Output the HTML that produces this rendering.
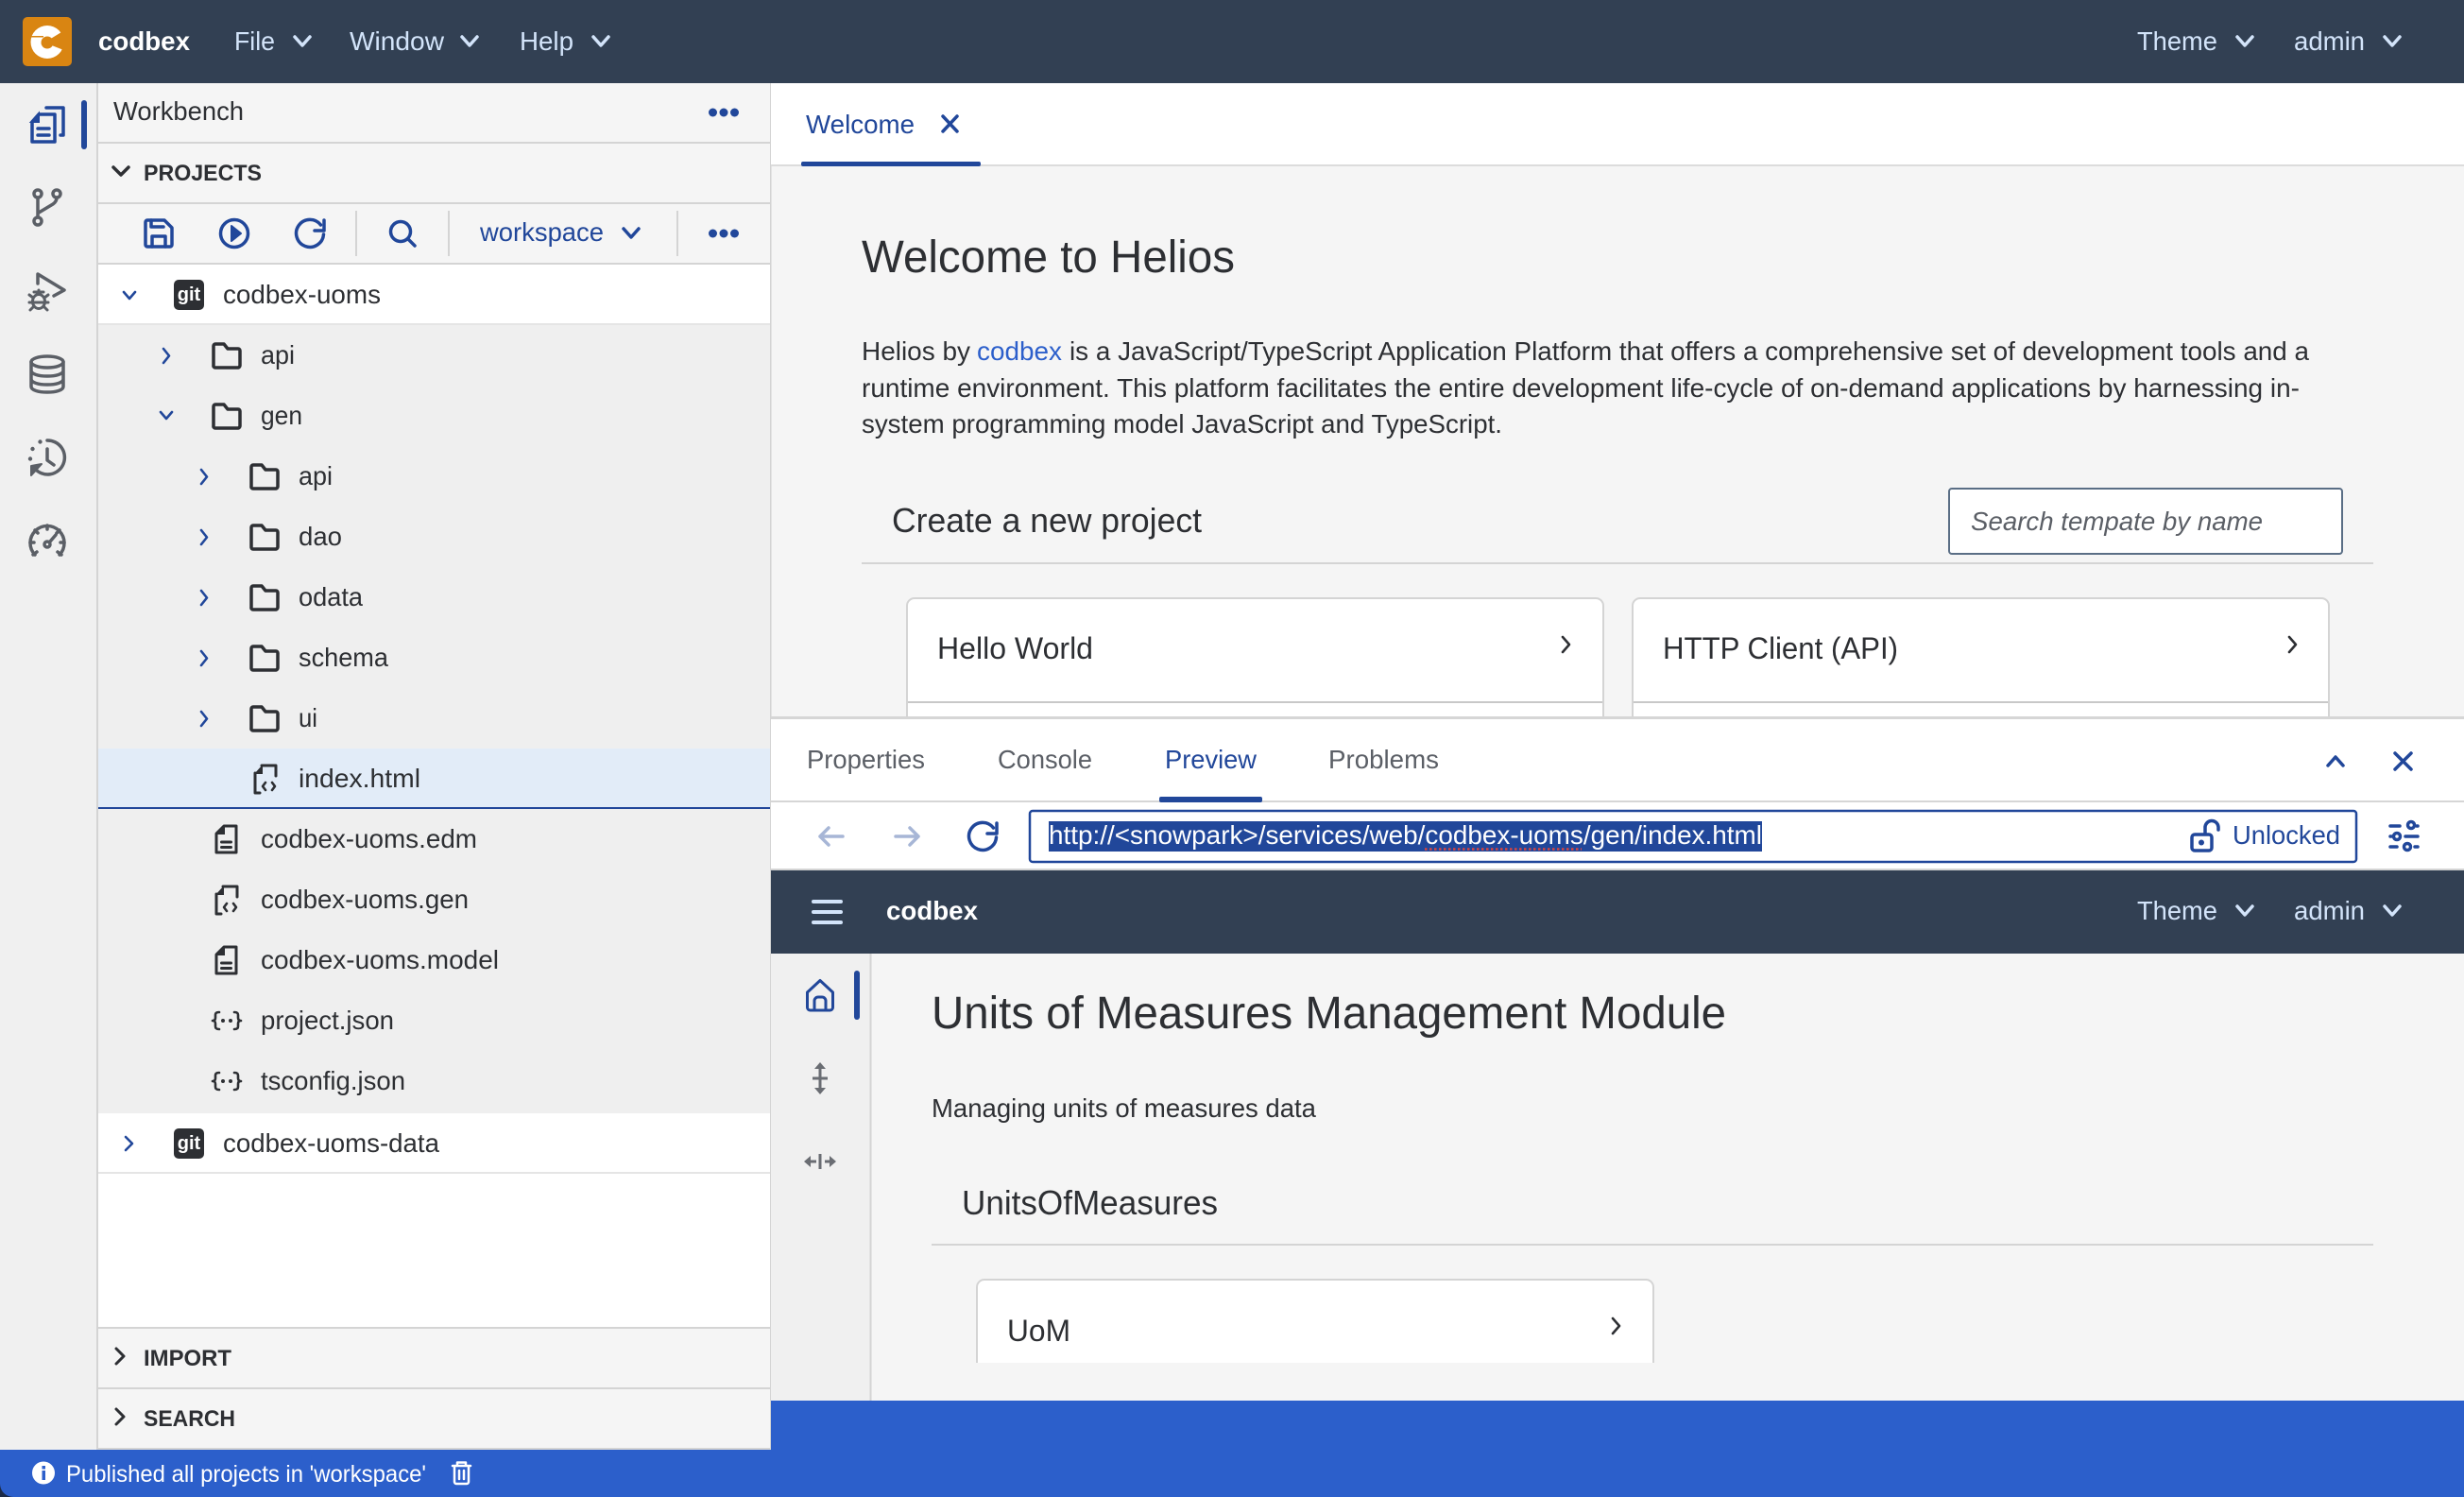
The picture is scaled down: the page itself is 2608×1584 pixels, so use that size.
<!DOCTYPE html>
<html><head><meta charset="utf-8"><title>codbex</title>
<style>
html,body{margin:0;padding:0;background:#f5f5f5;overflow:hidden}
svg{display:block}
text{font-family:"Liberation Sans",Arial,sans-serif;font-size:28px;fill:#2d2f33}
.nav{fill:#d3e4fa}.w{fill:#fff;font-weight:700}.b{fill:#21479a}.h{font-weight:700;font-size:24px}
.g{fill:#5b5f66}.ic{fill:none;stroke:#5b5f66;stroke-width:3.5;stroke-linecap:round;stroke-linejoin:round}
.ib{fill:none;stroke:#21479a;stroke-width:3.5;stroke-linecap:round;stroke-linejoin:round}
.id{fill:none;stroke:#2d2f33;stroke-width:3.5;stroke-linejoin:round;stroke-linecap:round}
.in{fill:none;stroke:#d3e4fa;stroke-width:3.5;stroke-linecap:round;stroke-linejoin:round}
.ik{fill:none;stroke:#2d2f33;stroke-width:2.6;stroke-linecap:round;stroke-linejoin:round}
.t{stroke-width:2.6}
.t3{stroke-width:3}
</style></head><body>
<svg xmlns="http://www.w3.org/2000/svg" width="2608" height="1584" viewBox="0 0 2608 1584">
<defs>
<g id="folder"><path class="id" d="M2 4a2 2 0 0 1 2-2h9l4 5h11a2 2 0 0 1 2 2v15.500a2.500 2.500 0 0 1-2 2.500H4a2 2 0 0 1-2-2.500z"/></g>
<g id="fdoc"><path class="id t3" d="M10 2h13v28H2V10z"/><path d="M11 1v10H1z" fill="#2d2f33"/><path class="id t3" d="M7.500 19h10M7.500 24.500h10"/></g>
<g id="fcode"><path class="id t3" d="M9 2h15v11M2 10v21h5"/><path d="M10 1v10H1z" fill="#2d2f33"/><path class="ik" d="M13 20l-3 4 3 4M20 20l3 4-3 4"/></g>
<g id="fjson"><path class="id t" d="M8 2C5 2 4 3 4 5v3c0 2-1 3-3 3 2 0 3 1 3 3v3c0 2 1 3 4 3M24 2c3 0 4 1 4 3v3c0 2 1 3 3 3-2 0-3 1-3 3v3c0 2-1 3-4 3"/><circle cx="12" cy="11" r="2" fill="#2d2f33"/><circle cx="20" cy="11" r="2" fill="#2d2f33"/></g>
<g id="dots"><circle cx="4.500" cy="0" r="4.500" fill="#21479a"/><circle cx="16" cy="0" r="4.500" fill="#21479a"/><circle cx="27.500" cy="0" r="4.500" fill="#21479a"/></g>
</defs>

<rect width="2608" height="1584" fill="#f5f5f5"/>
<!-- Main header -->
<rect width="2608" height="88" fill="#324053"/>
<rect x="24" y="18" width="52" height="52" rx="5" fill="#d98512"/>
<circle cx="50" cy="44.500" r="17.500" fill="#fff"/>
<path d="M47 45L70 31V54z" fill="#d98512"/><circle cx="50" cy="45" r="6.500" fill="#d98512"/>
<rect x="32" y="38" width="14" height="1.500" fill="#d98512"/>
<text x="104" y="53" class="w" textLength="97" lengthAdjust="spacingAndGlyphs">codbex</text>
<text x="248" y="53" class="nav" textLength="43" lengthAdjust="spacingAndGlyphs">File</text>
<path class="in" d="M312 39l8 9 8-9"/>
<text x="370" y="53" class="nav" textLength="100" lengthAdjust="spacingAndGlyphs">Window</text>
<path class="in" d="M489 39l8 9 8-9"/>
<text x="550" y="53" class="nav" textLength="57" lengthAdjust="spacingAndGlyphs">Help</text>
<path class="in" d="M628 39l8 9 8-9"/>
<text x="2262" y="53" class="nav" textLength="85" lengthAdjust="spacingAndGlyphs">Theme</text>
<path class="in" d="M2368 39l8 9 8-9"/>
<text x="2428" y="53" class="nav" textLength="75" lengthAdjust="spacingAndGlyphs">admin</text>
<path class="in" d="M2524 39l8 9 8-9"/>

<!-- Left rail -->
<rect x="0" y="88" width="103" height="1446" fill="#f0f0f0"/>
<rect x="102" y="88" width="2" height="1446" fill="#d4d4d4"/>
<rect x="86" y="106" width="6" height="52" rx="3" fill="#21479a"/>
<path class="ib" d="M41 121h17v29H34v-21z"/><path d="M41 120v9h-8z" fill="#21479a" stroke="#21479a" stroke-width="2"/>
<path class="ib" d="M40 136h12M40 143h12M49 114h18v29h-3"/>
<g class="ic"><circle cx="40" cy="205" r="4"/><circle cx="60" cy="205" r="4"/><circle cx="40" cy="234" r="4"/><path d="M40 209v21M60 209c0 3-1 5-4 7l-15 9"/></g>
<g class="ic"><path d="M40 300v-10l28 17-11 6"/><ellipse cx="41" cy="319" rx="6.500" ry="7.500" class="t3" style="fill:none;stroke:#5b5f66"/><path class="t3" d="M41 307h0M36 309l10 0M31 312l4 3M51 312l-4 3M31 320h5M51 320h-5M32 328l4-4M50 328l-4-4M36 320h10"/></g>
<g class="ic"><ellipse cx="50" cy="383" rx="17" ry="6"/><path d="M33 383v26c0 4 8 6 17 6s17-2 17-6v-26M33 392c0 4 8 6 17 6s17-2 17-6M33 401c0 4 8 6 17 6s17-2 17-6"/></g>
<g class="ic"><path d="M50 466a18 18 0 1 1-13 30"/><path d="M50 475v12l7 5"/></g>
<path d="M33 493l11-2-11 12z" fill="#5b5f66" stroke="#5b5f66" stroke-width="2" stroke-linejoin="round"/>
<circle cx="42.500" cy="467.500" r="2.200" fill="#5b5f66"/><circle cx="34.500" cy="475" r="2.200" fill="#5b5f66"/><circle cx="32" cy="485.500" r="2.200" fill="#5b5f66"/>
<g class="ic"><path d="M37 587a18 18 0 1 1 26 0"/><path d="M50 556v4M32 574h4M68 574h-4M37 561l3 3M63 561l-3 3M35 587l4-3M65 587l-4-3" /><path d="M53 573l6-7"/><circle cx="50" cy="576" r="3"/></g>

<!-- Left panel -->
<rect x="104" y="88" width="712" height="62" fill="#f5f5f5"/>
<rect x="104" y="150" width="712" height="2" fill="#d4d4d4"/>
<text x="120" y="127" textLength="138" lengthAdjust="spacingAndGlyphs">Workbench</text>
<use href="#dots" x="750" y="119"/>
<rect x="104" y="214" width="712" height="2" fill="#d4d4d4"/>
<path class="id" d="M120 177l8 8 8-8"/>
<text x="152" y="191" class="h" textLength="125" lengthAdjust="spacingAndGlyphs">PROJECTS</text>
<rect x="104" y="278" width="712" height="2" fill="#d4d4d4"/>
<g transform="translate(152 231)" class="ib"><path d="M4 2h18l8 8v18a2 2 0 0 1-2 2H4a2 2 0 0 1-2-2V4a2 2 0 0 1 2-2z"/><path d="M8 2v7h13M9 30V19h14v11"/></g>
<g transform="translate(232 231)" class="ib"><circle cx="16" cy="16" r="14.500"/></g><path d="M245 239l10 8-10 8z" fill="#21479a" stroke="#21479a" stroke-linejoin="round" stroke-width="2"/>
<g transform="translate(312 231)" class="ib"><path d="M27.500 7A14.500 14.500 0 1 0 30.500 17"/><path d="M31 2v11H21"/></g>
<rect x="376" y="223" width="2" height="48" fill="#d4d4d4"/>
<g transform="translate(412 233)" class="ib"><circle cx="12" cy="12" r="10.500"/><path d="M20 20l7 7"/></g>
<rect x="474" y="223" width="2" height="48" fill="#d4d4d4"/>
<text x="508" y="255" class="b" textLength="131" lengthAdjust="spacingAndGlyphs">workspace</text>
<path class="ib" d="M660 242l8 9 8-9"/>
<rect x="716" y="223" width="2" height="48" fill="#d4d4d4"/>
<use href="#dots" x="750" y="247"/>

<rect x="104" y="280" width="712" height="62" fill="#fff"/>
<rect x="104" y="342" width="712" height="2" fill="#e5e5e5"/>
<rect x="104" y="344" width="712" height="834" fill="#efefef"/>
<rect x="104" y="1178" width="712" height="226" fill="#fff"/>
<rect x="104" y="1240" width="712" height="2" fill="#e5e5e5"/>
<rect x="104" y="792" width="712" height="62" fill="#e2ecf8"/>
<rect x="104" y="854" width="712" height="2" fill="#21479a"/>

<path class="ib t" d="M131 309l6 7 6-7"/>
<rect x="184" y="296" width="32" height="32" rx="5" fill="#2d2f33"/>
<text x="200" y="318" text-anchor="middle" style="font-size:20px;font-weight:700;fill:#fff">git</text>
<text x="236" y="321" textLength="167" lengthAdjust="spacingAndGlyphs">codbex-uoms</text>

<path class="ib t" d="M173 369l6 7.500-6 7.500"/><use href="#folder" x="224" y="362"/>
<text x="276" y="385" textLength="36" lengthAdjust="spacingAndGlyphs">api</text>
<path class="ib t" d="M170 436l6 7 6-7"/><use href="#folder" x="224" y="426"/>
<text x="276" y="449" textLength="44" lengthAdjust="spacingAndGlyphs">gen</text>

<path class="ib t" d="M213 497l6 7.500-6 7.500"/><use href="#folder" x="264" y="490"/>
<text x="316" y="513" textLength="36" lengthAdjust="spacingAndGlyphs">api</text>
<path class="ib t" d="M213 561l6 7.500-6 7.500"/><use href="#folder" x="264" y="554"/>
<text x="316" y="577" textLength="46" lengthAdjust="spacingAndGlyphs">dao</text>
<path class="ib t" d="M213 625l6 7.500-6 7.500"/><use href="#folder" x="264" y="618"/>
<text x="316" y="641" textLength="68" lengthAdjust="spacingAndGlyphs">odata</text>
<path class="ib t" d="M213 689l6 7.500-6 7.500"/><use href="#folder" x="264" y="682"/>
<text x="316" y="705" textLength="95" lengthAdjust="spacingAndGlyphs">schema</text>
<path class="ib t" d="M213 753l6 7.500-6 7.500"/><use href="#folder" x="264" y="746"/>
<text x="316" y="769" textLength="20" lengthAdjust="spacingAndGlyphs">ui</text>

<use href="#fcode" x="268" y="808"/>
<text x="316" y="833" textLength="129" lengthAdjust="spacingAndGlyphs">index.html</text>
<use href="#fdoc" x="227" y="872"/>
<text x="276" y="897" textLength="229" lengthAdjust="spacingAndGlyphs">codbex-uoms.edm</text>
<use href="#fcode" x="227" y="936"/>
<text x="276" y="961" textLength="220" lengthAdjust="spacingAndGlyphs">codbex-uoms.gen</text>
<use href="#fdoc" x="227" y="1000"/>
<text x="276" y="1025" textLength="252" lengthAdjust="spacingAndGlyphs">codbex-uoms.model</text>
<use href="#fjson" x="224" y="1069"/>
<text x="276" y="1089" textLength="141" lengthAdjust="spacingAndGlyphs">project.json</text>
<use href="#fjson" x="224" y="1133"/>
<text x="276" y="1153" textLength="153" lengthAdjust="spacingAndGlyphs">tsconfig.json</text>

<path class="ib t" d="M133 1203l7 7-7 7"/>
<rect x="184" y="1194" width="32" height="32" rx="5" fill="#2d2f33"/>
<text x="200" y="1216" text-anchor="middle" style="font-size:20px;font-weight:700;fill:#fff">git</text>
<text x="236" y="1219" textLength="229" lengthAdjust="spacingAndGlyphs">codbex-uoms-data</text>

<rect x="104" y="1404" width="712" height="2" fill="#d4d4d4"/>
<path class="id t3" d="M123 1427l8 8-8 8"/>
<text x="152" y="1445" class="h" textLength="93" lengthAdjust="spacingAndGlyphs">IMPORT</text>
<rect x="104" y="1468" width="712" height="2" fill="#d4d4d4"/>
<path class="id t3" d="M123 1491l8 8-8 8"/>
<text x="152" y="1509" class="h" textLength="97" lengthAdjust="spacingAndGlyphs">SEARCH</text>
<rect x="104" y="1532" width="712" height="2" fill="#d4d4d4"/>
<rect x="815" y="88" width="1.500" height="1446" fill="#d4d4d4"/>

<!-- Status bar -->
<rect x="0" y="1534" width="820" height="50" fill="#2c5fcb"/>
<circle cx="46" cy="1558.500" r="12" fill="#fff"/>
<rect x="44.500" y="1556" width="3.500" height="10" fill="#2c5fcb"/><rect x="44.500" y="1551" width="3.500" height="3.500" fill="#2c5fcb"/>
<text x="70" y="1568" textLength="381" lengthAdjust="spacingAndGlyphs" style="fill:#fff;font-size:25px">Published all projects in 'workspace'</text>
<g fill="none" stroke="#fff" stroke-width="2.500" stroke-linecap="round" stroke-linejoin="round"><path d="M479 1551h19M484 1551v-3.500h9v3.500M481 1551v17a2 2 0 0 0 2 2h11a2 2 0 0 0 2-2v-17M486 1556v9M491 1556v9"/></g>

<!-- Upper right panel -->
<rect x="816" y="88" width="1792" height="86" fill="#fff"/>
<rect x="816" y="174" width="1792" height="2" fill="#dcdcdc"/>
<text x="853" y="141" class="b" textLength="115" lengthAdjust="spacingAndGlyphs">Welcome</text>
<path class="ib" d="M998 123l15 16M1013 123l-15 16"/>
<rect x="848" y="171" width="190" height="5" rx="2" fill="#21479a"/>

<text x="912" y="288" style="font-size:48px" textLength="395" lengthAdjust="spacingAndGlyphs">Welcome to Helios</text>
<text x="912" y="381" textLength="115" lengthAdjust="spacingAndGlyphs">Helios by</text>
<text x="1034" y="381" textLength="90" lengthAdjust="spacingAndGlyphs" style="fill:#2c5fcb">codbex</text>
<text x="1132" y="381" textLength="1312" lengthAdjust="spacingAndGlyphs">is a JavaScript/TypeScript Application Platform that offers a comprehensive set of development tools and a</text>
<text x="912" y="420" textLength="1522" lengthAdjust="spacingAndGlyphs">runtime environment. This platform facilitates the entire development life-cycle of on-demand applications by harnessing in-</text>
<text x="912" y="458" textLength="678" lengthAdjust="spacingAndGlyphs">system programming model JavaScript and TypeScript.</text>

<text x="944" y="563" style="font-size:36px" textLength="328" lengthAdjust="spacingAndGlyphs">Create a new project</text>
<rect x="912" y="595" width="1600" height="2" fill="#d4d4d4"/>
<rect x="2063" y="517" width="416" height="69" rx="3" fill="#fff" stroke="#5a6e85" stroke-width="2"/>
<text x="2086" y="561" textLength="309" lengthAdjust="spacingAndGlyphs" style="font-style:italic;fill:#5b5f66">Search tempate by name</text>

<rect x="960" y="633" width="737" height="140" rx="8" fill="#fff" stroke="#d4d4d4" stroke-width="2"/>
<rect x="961" y="742" width="735" height="2" fill="#c8c8c8"/>
<text x="992" y="697" style="font-size:32px" textLength="165" lengthAdjust="spacingAndGlyphs">Hello World</text>
<path class="id t" d="M1654 674l7 8-7 8"/>
<rect x="1728" y="633" width="737" height="140" rx="8" fill="#fff" stroke="#d4d4d4" stroke-width="2"/>
<rect x="1729" y="742" width="735" height="2" fill="#c8c8c8"/>
<text x="1760" y="697" style="font-size:32px" textLength="249" lengthAdjust="spacingAndGlyphs">HTTP Client (API)</text>
<path class="id t" d="M2423 674l7 8-7 8"/>

<!-- Bottom panel -->
<rect x="816" y="760" width="1792" height="88" fill="#fff"/>
<rect x="816" y="758" width="1792" height="3" fill="#d6d6d6"/>
<rect x="816" y="847" width="1792" height="2" fill="#d6d6d6"/>
<text x="854" y="813" class="g" textLength="125" lengthAdjust="spacingAndGlyphs">Properties</text>
<text x="1056" y="813" class="g" textLength="100" lengthAdjust="spacingAndGlyphs">Console</text>
<text x="1233" y="813" class="b" textLength="97" lengthAdjust="spacingAndGlyphs">Preview</text>
<text x="1406" y="813" class="g" textLength="117" lengthAdjust="spacingAndGlyphs">Problems</text>
<rect x="1227" y="843" width="109" height="6" rx="2" fill="#21479a"/>
<path class="ib" d="M2464 810l8-9 8 9"/>
<path class="ib" d="M2535 797l17 17M2552 797l-17 17"/>

<!-- Address bar -->
<rect x="816" y="849" width="1792" height="71" fill="#fff"/>
<rect x="816" y="919" width="1792" height="3" fill="#d4d4d4"/>
<g fill="none" stroke="#a7b6d6" stroke-width="3.500" stroke-linecap="round" stroke-linejoin="round"><path d="M892 885h-24M877 876l-9 9 9 9M948 885h24M963 876l9 9-9 9"/></g>
<g transform="translate(1024 869)" class="ib"><path d="M27.500 7A14.500 14.500 0 1 0 30.500 17"/><path d="M31 2v11H21"/></g>
<rect x="1090" y="858" width="1404" height="54" rx="3" fill="#fff" stroke="#21479a" stroke-width="2.500"/>
<rect x="1110" y="869" width="755" height="32" fill="#21479a"/>
<text x="1110" y="893" textLength="755" lengthAdjust="spacingAndGlyphs" style="fill:#fff">http://&lt;snowpark&gt;/services/web/codbex-uoms/gen/index.html</text>
<line x1="1508" y1="898.500" x2="1674" y2="898.500" stroke="#d8453f" stroke-width="2.500" stroke-dasharray="2.500 2.500"/>
<g class="ib"><rect x="2320" y="883" width="21" height="17" rx="3"/><path d="M2334 882v-6a6.500 6.500 0 0 1 14-1v3"/></g><circle cx="2330" cy="891.500" r="3" fill="#21479a"/>
<text x="2363" y="893" class="b" textLength="114" lengthAdjust="spacingAndGlyphs">Unlocked</text>
<g class="ib"><path d="M2530 874h10M2558 874h1M2530 885h1M2546 885h13M2530 896h7M2556 896h3"/><circle cx="2552" cy="873" r="3.500"/><circle cx="2537" cy="885" r="3.500"/><circle cx="2548" cy="896" r="3.500"/></g>

<!-- Preview -->
<rect x="816" y="921" width="1792" height="88" fill="#324053"/>
<path class="in" style="stroke-width:4" d="M861 954h29M861 965h29M861 976h29"/>
<text x="938" y="973" class="w" textLength="97" lengthAdjust="spacingAndGlyphs">codbex</text>
<text x="2262" y="973" class="nav" textLength="85" lengthAdjust="spacingAndGlyphs">Theme</text>
<path class="in" d="M2368 959l8 9 8-9"/>
<text x="2428" y="973" class="nav" textLength="75" lengthAdjust="spacingAndGlyphs">admin</text>
<path class="in" d="M2524 959l8 9 8-9"/>

<rect x="816" y="1009" width="105" height="473" fill="#f0f0f0"/>
<rect x="920.500" y="1009" width="2" height="473" fill="#d4d4d4"/>
<rect x="904" y="1027" width="6" height="52" rx="3" fill="#21479a"/>
<path class="ib t3" d="M868 1037.500L854.500 1050v16a3 3 0 0 0 3 3h21a3 3 0 0 0 3-3v-16z"/>
<path class="ib t3" d="M862 1069v-10a4 4 0 0 1 4-4h4a4 4 0 0 1 4 4v10"/>
<g fill="#6a6d73"><rect x="866.500" y="1128" width="3" height="26"/><rect x="860" y="1139.500" width="16" height="3"/><path d="M868 1124l6 7h-12zM868 1158l6-7h-12z"/>
<rect x="866.500" y="1221" width="3" height="16"/><rect x="856" y="1227.500" width="8" height="3"/><rect x="873" y="1227.500" width="8" height="3"/><path d="M851 1229l7-6v12zM885 1229l-7-6v12z"/></g>

<text x="986" y="1088" style="font-size:48px" textLength="841" lengthAdjust="spacingAndGlyphs">Units of Measures Management Module</text>
<text x="986" y="1182" textLength="407" lengthAdjust="spacingAndGlyphs">Managing units of measures data</text>
<text x="1018" y="1285" style="font-size:36px" textLength="271" lengthAdjust="spacingAndGlyphs">UnitsOfMeasures</text>
<rect x="986" y="1316" width="1526" height="2" fill="#d4d4d4"/>
<path d="M1034 1446v-84a8 8 0 0 1 8-8h700a8 8 0 0 1 8 8v84z" fill="#fff" stroke="#d4d4d4" stroke-width="2"/>
<rect x="1030" y="1442" width="724" height="6" fill="#f5f5f5"/>
<text x="1066" y="1419" style="font-size:32px" textLength="67" lengthAdjust="spacingAndGlyphs">UoM</text>
<path class="id t" d="M1707 1395l7 8-7 8"/>

<rect x="816" y="1482" width="1792" height="102" fill="#2c5fcb"/>

<!-- window corners -->
<path d="M0 1570v14h14a14 14 0 0 1-14-14z" fill="#1c2a47"/>
</svg>
</body></html>
